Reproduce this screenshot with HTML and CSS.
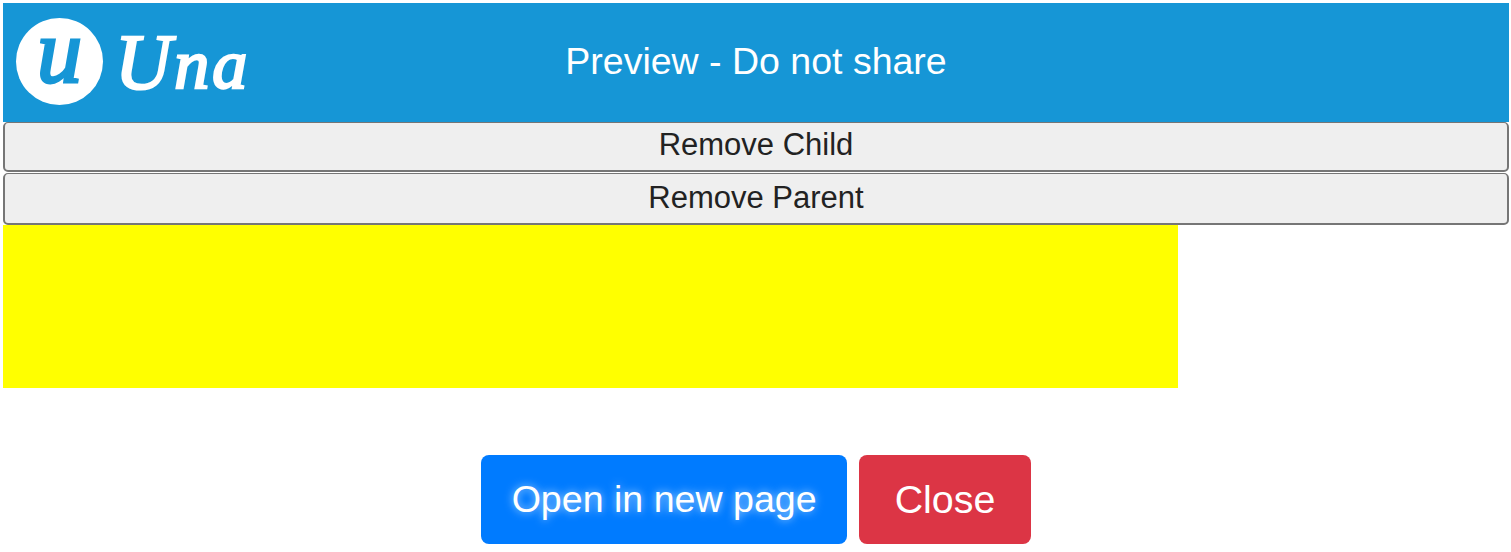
FILE: index.html
```html
<!DOCTYPE html>
<html lang="en">
  <head>
    <meta charset="UTF-8" />
    <meta name="viewport" content="width=device-width, initial-scale=1.0" />
    <title>Preview</title>
    <link rel="stylesheet" href="styles.css">
  </head>
  <body>
    <div class="header">
      <div class="logo">
        <span class="logo-mark">u</span>
        <span class="logo-name"><span class="logo-cap">U</span>na</span>
      </div>
      <div class="header-title">Preview - Do not share</div>
    </div>
    <button class="wide-btn">Remove Child</button>
    <button class="wide-btn">Remove Parent</button>
    <div class="yellow-box"></div>
    <div class="actions">
      <button class="action-btn open">Open in new page</button>
      <button class="action-btn close">Close</button>
    </div>
  </body>
</html>
```

FILE: styles.css
```css
body {
  margin: 3px 2px 0 3px;
  font-family: "Liberation Sans", Arial, sans-serif;
  background: #fff;
}
.header {
  display: grid;
  grid-template-columns: 1fr auto 1fr;
  align-items: center;
  height: 119px;
  background: #1696d6;
  color: #fff;
}
.logo {
  display: flex;
  align-items: center;
  gap: 12px;
  padding: 0 0 2px 13px;
}
.logo-mark {
  display: flex;
  align-items: center;
  justify-content: center;
  width: 87px;
  height: 87px;
  border-radius: 50%;
  background: #fff;
  color: #1696d6;
  font-family: "Liberation Serif", serif;
  font-style: italic;
  font-size: 90px;
  line-height: 0.8;
  padding-bottom: 20px;
  box-sizing: border-box;
  -webkit-text-stroke: 3px #1696d6;
}
.logo-name {
  font-family: "Liberation Serif", serif;
  font-style: italic;
  font-size: 70px;
  letter-spacing: 3px;
  line-height: 1;
  color: #fff;
  -webkit-text-stroke: 2.5px #fff;
}
.logo-cap {
  font-size: 78px;
}
.header-title {
  font-size: 37.5px;
  margin-top: -2px;
}
.wide-btn {
  display: block;
  width: 100%;
  height: 50px;
  margin: 0 0 1px;
  padding: 0 0 3px;
  font-family: inherit;
  font-size: 31px;
  color: #222;
  background: #efefef;
  border: 2px solid #767676;
  border-top-width: 1px;
  border-radius: 5px;
}
.wide-btn + .wide-btn {
  height: 52px;
  margin-bottom: 0;
  padding-bottom: 1px;
}
.yellow-box {
  width: 1175px;
  height: 163px;
  background: #ff0;
}
.actions {
  display: flex;
  justify-content: center;
  gap: 12px;
  margin-top: 67px;
}
.action-btn {
  height: 89px;
  font-family: inherit;
  color: #fff;
  border: none;
  border-radius: 8px;
}
.open {
  padding: 0 30.5px;
  font-size: 37.6px;
  background: #007bff;
  text-shadow: 0 0 8px rgba(200, 230, 255, 0.9);
}
.close {
  padding: 0 35.5px;
  font-size: 39.4px;
  background: #dc3545;
}
```
